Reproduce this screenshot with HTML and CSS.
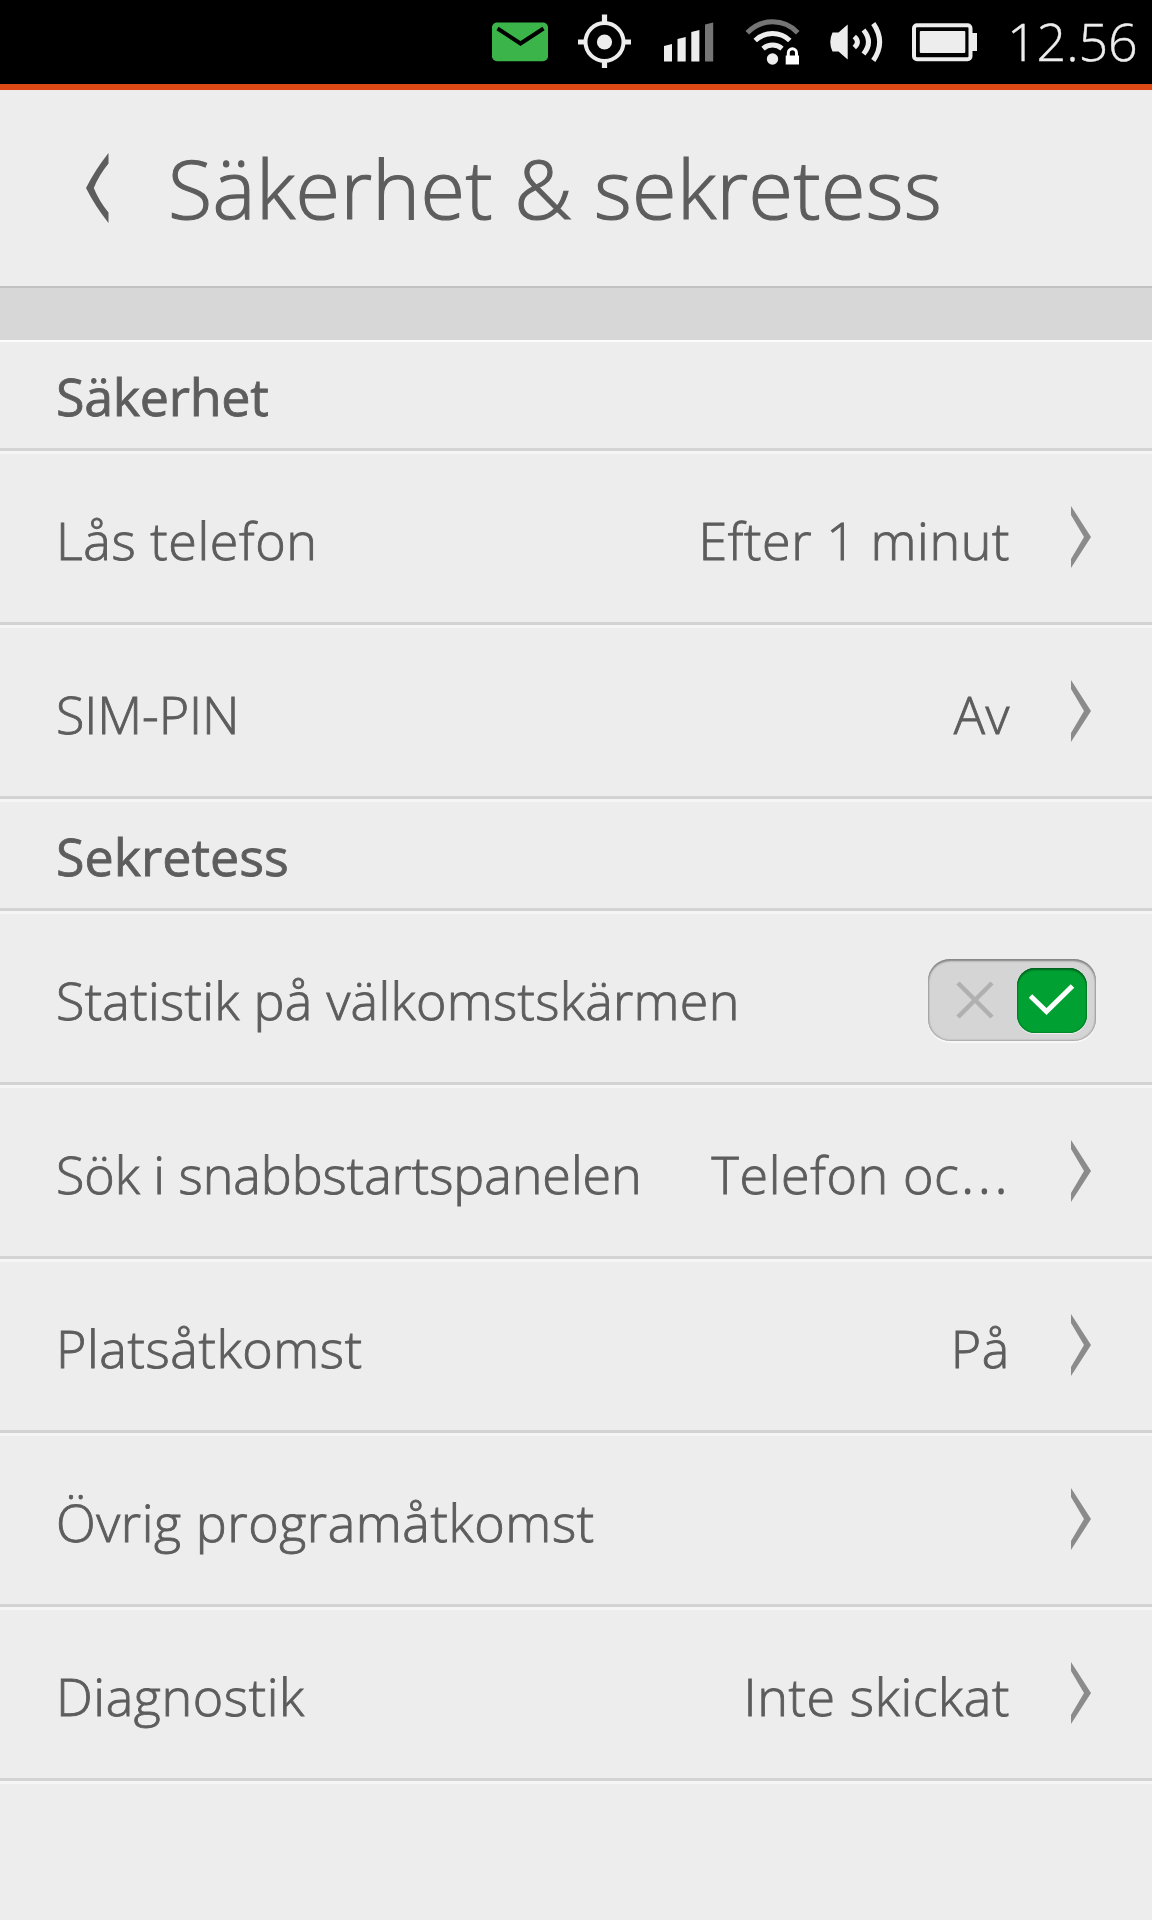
FILE: index.html
```
<!DOCTYPE html>
<html lang="sv">
<head>
    <meta charset="UTF-8">
    <meta name="viewport" content="width=device-width, initial-scale=1.0">
    <title>Säkerhet &amp; sekretess</title>
    <link rel="stylesheet" href="styles.css">
</head>
<body>
    <div class="statusbar">
        <svg width="71" height="84" viewBox="492 0 71 84">
            <rect x="492" y="22.5" width="56" height="38.7" rx="5" fill="#3bb54a"/>
            <path d="M497.5 28.5L520.5 43.5L543.5 28.5" fill="none" stroke="#000" stroke-width="4"/>
        </svg>
        <svg width="84" height="84" viewBox="563 0 84 84" fill="none" stroke="#ededed">
            <circle cx="604.5" cy="42" r="19" stroke-width="4"/>
            <circle cx="604.5" cy="42" r="7.6" fill="#ededed" stroke="none"/>
            <path d="M604.5 14.5V23M604.5 61V68M578 42H585.5M623.5 42H631" stroke-width="5.2"/>
        </svg>
        <svg width="82" height="84" viewBox="647 0 82 84" fill="#ededed">
            <path d="M664 46L672 44V61.5H664ZM677.5 39L685.7 37V61.5H677.5ZM691.3 32L699.4 30V61.5H691.3Z"/>
            <path d="M705 24.5L713.2 22.5V61.5H705Z" fill="#757575"/>
        </svg>
        <svg width="86" height="84" viewBox="729 0 86 84" fill="none" stroke="#ededed" stroke-width="5">
            <path d="M747.3 32.8A34.5 34.5 0 0 1 797.7 32.8" stroke="#757575"/>
            <path d="M755.2 40.5A25 25 0 0 1 789.8 40.5"/>
            <path d="M763 48.6A14.5 14.5 0 0 1 782 48.6"/>
            <circle cx="772.5" cy="59" r="5.7" fill="#ededed" stroke="none"/>
            <path d="M785.7 55.5H799V64.5H785.7Z" fill="#fff" stroke="none"/>
            <path d="M788.3 57V53A4.1 4.3 0 0 1 796.5 53V57" stroke="#fff" stroke-width="3"/>
        </svg>
        <svg width="82" height="84" viewBox="815 0 82 84" fill="none" stroke="#ededed" stroke-width="5">
            <path d="M832.5 32.5H838.5L847.7 24.5V59.5L838.5 51.5H832.5Q828 42 832.5 32.5Z" fill="#ededed" stroke="none"/>
            <path d="M854.3 36.5Q860.5 42 854.3 47.5"/>
            <path d="M863.5 30Q873.5 42 863.5 54"/>
            <path d="M873.3 23.5Q886 42 873.3 60.5"/>
        </svg>
        <svg width="96" height="84" viewBox="897 0 96 84" fill="#ededed">
            <rect x="914" y="25.3" width="56.5" height="34" rx="3" fill="none" stroke="#ededed" stroke-width="4"/>
            <rect x="919.8" y="31" width="45.5" height="22" rx="1"/>
            <path d="M972 33H977V51H972Z"/>
        </svg>
        <span class="time">12.56</span>
    </div>

    <div class="header">
        <svg class="back" width="24" height="70" viewBox="0 0 24 70">
            <path d="M22.5 0V10.5Q13 22 7.800 35Q13 48 22.5 59.5V70Q9 53 0 35Q9 17 22.5 0Z" fill="#5d5d5d"/>
        </svg>
        <h1 class="title">Säkerhet &amp; sekretess</h1>
    </div>
    <div class="band"></div>

    <div class="list">
        <h2 class="section section-first">Säkerhet</h2>
        <div class="row">
            <span class="label">Lås telefon</span>
            <span class="value">Efter 1 minut</span>
            <svg class="chevron" width="20" height="62" viewBox="0 0 20 62"><path d="M0 0L20 31L0 62V53L13 31L0 9Z"/></svg>
        </div>
        <div class="row">
            <span class="label label-sim">SIM-PIN</span>
            <span class="value">Av</span>
            <svg class="chevron" width="20" height="62" viewBox="0 0 20 62"><path d="M0 0L20 31L0 62V53L13 31L0 9Z"/></svg>
        </div>

        <h2 class="section">Sekretess</h2>
        <div class="row row-switch">
            <span class="label label-stats">Statistik på välkomstskärmen</span>
            <div class="switch">
                <svg class="cross" width="38" height="38" viewBox="0 0 38 38"><path d="M2 2L36 36M36 2L2 36" stroke="#b0b0b0" stroke-width="4.5"/></svg>
                <div class="thumb">
                    <svg width="46" height="32" viewBox="0 0 46 32"><path d="M1.5 12L17.5 27.5L43.5 2" fill="none" stroke="#fff" stroke-width="5"/></svg>
                </div>
            </div>
        </div>
        <div class="row">
            <span class="label label-search">Sök i snabbstartspanelen</span>
            <span class="value">Telefon oc<span class="dots">…</span></span>
            <svg class="chevron" width="20" height="62" viewBox="0 0 20 62"><path d="M0 0L20 31L0 62V53L13 31L0 9Z"/></svg>
        </div>
        <div class="row">
            <span class="label">Platsåtkomst</span>
            <span class="value">På</span>
            <svg class="chevron" width="20" height="62" viewBox="0 0 20 62"><path d="M0 0L20 31L0 62V53L13 31L0 9Z"/></svg>
        </div>
        <div class="row">
            <span class="label">Övrig programåtkomst</span>
            <svg class="chevron" width="20" height="62" viewBox="0 0 20 62"><path d="M0 0L20 31L0 62V53L13 31L0 9Z"/></svg>
        </div>
        <div class="row">
            <span class="label">Diagnostik</span>
            <span class="value">Inte skickat</span>
            <svg class="chevron" width="20" height="62" viewBox="0 0 20 62"><path d="M0 0L20 31L0 62V53L13 31L0 9Z"/></svg>
        </div>
    </div>
</body>
</html>
```
FILE: styles.css
```
* {
    box-sizing: border-box;
}
body {
    margin: 0;
    min-height: 1920px;
    background-color: #ededed;
    color: #5d5d5d;
    font-family: "Open Sans", sans-serif;
    font-size: 52px;
    font-weight: 300;
    line-height: 70px;
    white-space: nowrap;
    -webkit-text-stroke: 0.9px;
}
svg {
    display: block;
    flex: none;
}
.statusbar {
    display: flex;
    height: 90px;
    padding-left: 492px;
    background-color: #000;
    border-bottom: 6px solid #dd4814;
}
.time {
    padding: 6px 0 0 14px;
    color: #ededed;
    letter-spacing: -0.1px;
    -webkit-text-stroke: 0.4px;
}
.header {
    display: flex;
    align-items: center;
    height: 196px;
    padding-left: 86px;
}
.back {
    margin-top: -1px;
}
.title {
    margin: -1px 0 0 58px;
    font-size: 81px;
    font-weight: 300;
    line-height: 110px;
    letter-spacing: 0.4px;
    -webkit-text-stroke: 1.2px;
}
.band {
    height: 56px;
    background-color: #d7d7d7;
    border-top: 2px solid #c1c1c1;
    border-bottom: 2px solid #fcfcfc;
}
.section {
    display: flex;
    align-items: flex-end;
    height: 112px;
    margin: 0;
    padding: 0 56px 17px;
    border-bottom: 3px solid #d3d3d3;
    box-shadow: 0 3px 0 #f5f5f5;
    font-size: 52px;
    font-weight: 400;
    -webkit-text-stroke: 0.8px;
}
.section-first {
    height: 109px;
    letter-spacing: -0.3px;
}
.row {
    display: flex;
    align-items: center;
    height: 174px;
    padding: 7px 61px 0 56px;
    border-bottom: 3px solid #d3d3d3;
    box-shadow: 0 3px 0 #f5f5f5;
    letter-spacing: 0.6px;
}
.label {
    flex: 1;
}
.label-sim {
    letter-spacing: -0.1px;
}
.label-stats {
    letter-spacing: 0.3px;
}
.label-search {
    letter-spacing: -0.05px;
}
.dots {
    font-size: 70px;
    line-height: 0;
    -webkit-text-stroke: 0;
}
.chevron {
    margin: -7px 0 0 61px;
    fill: #8b8b8b;
}
.row-switch {
    padding-right: 56px;
}
.switch {
    display: flex;
    align-items: center;
    justify-content: space-between;
    width: 168px;
    height: 82px;
    padding: 0 9px 0 28px;
    border-radius: 22px;
    background-color: #d5d5d5;
    box-shadow: inset 0 2px 2px #858585, inset 0 0 2px 1px #a5a5a5, 0 2px 1px #f8f8f8;
}
.thumb {
    display: flex;
    align-items: center;
    justify-content: center;
    width: 70px;
    height: 65px;
    border-radius: 18px;
    background-color: #00a132;
    box-shadow: inset 0 2px 2px #00651f, inset 0 0 1px 1px #00842a, 0 1px 1px #f0f0f0;
}
```
